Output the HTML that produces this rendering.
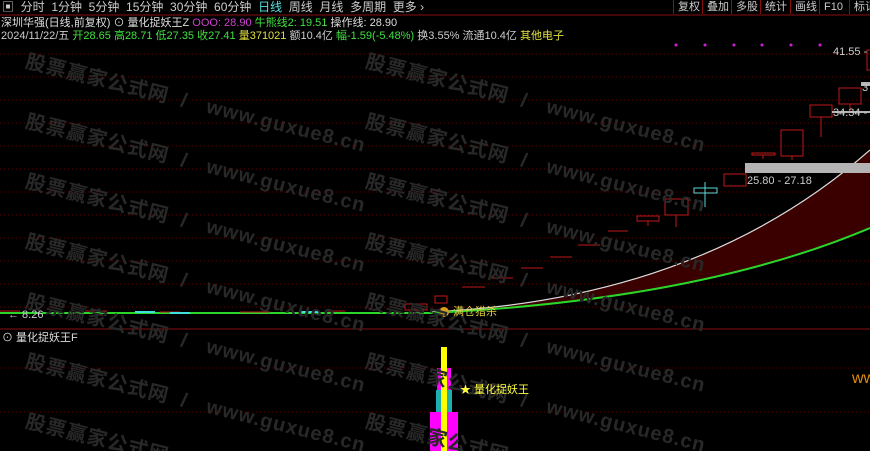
<!DOCTYPE html><html><head><meta charset="utf-8"><style>
html,body{margin:0;width:870px;height:451px;overflow:hidden}
body{background:#000;font-family:"Liberation Sans","Noto Sans CJK SC",sans-serif}
#w{position:relative;width:870px;height:451px;overflow:hidden}
.t{position:absolute;white-space:nowrap;font-size:11px;line-height:13px}
.wm{position:absolute;white-space:nowrap;color:#282828;font-size:20px;font-weight:bold;transform:rotate(14deg);transform-origin:0 0;letter-spacing:1px}
.b{position:absolute;top:0;height:14px;border-left:1px solid #8a1010;color:#ccc;font-size:11px;line-height:14px;padding:0 4px;white-space:nowrap}
</style></head><body><div id="w">
<svg width="870" height="451" style="position:absolute;left:0;top:0">
<g stroke="#5a0000" stroke-dasharray="1,3">
<line x1="0" y1="54" x2="870" y2="54"/><line x1="0" y1="77" x2="870" y2="77"/><line x1="0" y1="100" x2="870" y2="100"/><line x1="0" y1="123" x2="870" y2="123"/><line x1="0" y1="146" x2="870" y2="146"/><line x1="0" y1="169" x2="870" y2="169"/><line x1="0" y1="192" x2="870" y2="192"/><line x1="0" y1="215" x2="870" y2="215"/><line x1="0" y1="238" x2="870" y2="238"/><line x1="0" y1="261" x2="870" y2="261"/><line x1="0" y1="284" x2="870" y2="284"/><line x1="0" y1="307" x2="870" y2="307"/>
<line x1="0" y1="368" x2="870" y2="368"/><line x1="0" y1="412" x2="870" y2="412"/>
</g>
<line x1="0" y1="15" x2="870" y2="15" stroke="#8a1010"/>
<line x1="0" y1="329" x2="870" y2="329" stroke="#8a1010"/>
<path d="M430 312 Q700 300 870 150 L870 228 Q700 300 430 313Z" fill="#3a0000"/>
<path d="M430 312 Q700 300 870 150" stroke="#ddd" fill="none" stroke-width="1.2"/>
<path d="M0 313 L430 313 Q700 300 870 228" stroke="#2bd62b" fill="none" stroke-width="2"/>
<g fill="none" stroke="#c01818">
<rect x="405" y="304" width="22" height="6"/><rect x="435" y="296" width="12" height="7"/>
<line x1="462" y1="287" x2="485" y2="287"/><line x1="491" y1="278" x2="513" y2="278"/><line x1="521" y1="268" x2="543" y2="268"/><line x1="550" y1="257" x2="572" y2="257"/><line x1="578" y1="245" x2="600" y2="245"/><line x1="608" y1="231" x2="628" y2="231"/>
<rect x="637" y="216" width="22" height="5"/><line x1="648" y1="221" x2="648" y2="226"/>
<rect x="665" y="199" width="23" height="16"/><line x1="676" y1="215" x2="676" y2="227"/>
<rect x="724" y="174" width="22" height="12"/>
<rect x="752" y="153" width="23" height="2"/><line x1="763" y1="155" x2="763" y2="159"/>
<rect x="781" y="130" width="22" height="26"/><line x1="792" y1="156" x2="792" y2="160"/>
<rect x="810" y="105" width="22" height="12"/><line x1="821" y1="117" x2="821" y2="137"/>
<rect x="839" y="88" width="22" height="16"/><line x1="850" y1="104" x2="850" y2="112"/>
<rect x="867" y="50" width="6" height="20"/>
<line x1="0" y1="311" x2="20" y2="311"/><line x1="85" y1="311" x2="107" y2="311"/><line x1="160" y1="312" x2="180" y2="312"/><line x1="240" y1="312" x2="270" y2="312"/><line x1="325" y1="311" x2="345" y2="311"/>
</g>
<rect x="694" y="188" width="23" height="5" fill="none" stroke="#5ad8d8"/><line x1="705" y1="182" x2="705" y2="207" stroke="#5ad8d8"/>
<line x1="135" y1="312" x2="155" y2="312" stroke="#3ee0e0" stroke-width="2"/><line x1="300" y1="312" x2="320" y2="312" stroke="#3ee0e0" stroke-width="2"/><line x1="170" y1="313" x2="190" y2="313" stroke="#3ee0e0" stroke-width="2"/>
<rect x="745" y="163" width="125" height="10" fill="#b4b4b4"/>
<rect x="832" y="111" width="38" height="2" fill="#b4b4b4"/><rect x="861" y="82" width="9" height="4" fill="#b4b4b4"/>
<g fill="#d020d0"><circle cx="676" cy="45" r="1.5"/><circle cx="705" cy="45" r="1.5"/><circle cx="734" cy="45" r="1.5"/><circle cx="762" cy="45" r="1.5"/><circle cx="791" cy="45" r="1.5"/><circle cx="820" cy="45" r="1.5"/></g>
<rect x="430" y="412" width="28" height="39" fill="#ff00ff"/>
<rect x="437" y="368" width="14" height="44" fill="#ff00ff"/>
<rect x="436" y="390" width="16" height="22" fill="#1ab0b0"/>
<rect x="441" y="347" width="6" height="104" fill="#ffff00"/>
<circle cx="444" cy="312" r="5" fill="#d8a020"/>
</svg>
<div class="wm" style="left:30px;top:45px">股票赢家公式网 &nbsp;/ &nbsp;&nbsp;www.guxue8.cn</div>
<div class="wm" style="left:370px;top:45px">股票赢家公式网 &nbsp;/ &nbsp;&nbsp;www.guxue8.cn</div>
<div class="wm" style="left:30px;top:105px">股票赢家公式网 &nbsp;/ &nbsp;&nbsp;www.guxue8.cn</div>
<div class="wm" style="left:370px;top:105px">股票赢家公式网 &nbsp;/ &nbsp;&nbsp;www.guxue8.cn</div>
<div class="wm" style="left:30px;top:165px">股票赢家公式网 &nbsp;/ &nbsp;&nbsp;www.guxue8.cn</div>
<div class="wm" style="left:370px;top:165px">股票赢家公式网 &nbsp;/ &nbsp;&nbsp;www.guxue8.cn</div>
<div class="wm" style="left:30px;top:225px">股票赢家公式网 &nbsp;/ &nbsp;&nbsp;www.guxue8.cn</div>
<div class="wm" style="left:370px;top:225px">股票赢家公式网 &nbsp;/ &nbsp;&nbsp;www.guxue8.cn</div>
<div class="wm" style="left:30px;top:285px">股票赢家公式网 &nbsp;/ &nbsp;&nbsp;www.guxue8.cn</div>
<div class="wm" style="left:370px;top:285px">股票赢家公式网 &nbsp;/ &nbsp;&nbsp;www.guxue8.cn</div>
<div class="wm" style="left:30px;top:345px">股票赢家公式网 &nbsp;/ &nbsp;&nbsp;www.guxue8.cn</div>
<div class="wm" style="left:370px;top:345px">股票赢家公式网 &nbsp;/ &nbsp;&nbsp;www.guxue8.cn</div>
<div class="wm" style="left:30px;top:405px">股票赢家公式网</div>
<div class="wm" style="left:370px;top:405px">股票赢家公式网</div>
<div class="t" style="left:2px;top:1px;color:#ccc;font-size:12px">▣ &nbsp;分时 &nbsp;1分钟 &nbsp;5分钟 &nbsp;15分钟 &nbsp;30分钟 &nbsp;60分钟 &nbsp;<span style="color:#5ae0e0">日线</span> &nbsp;周线 &nbsp;月线 &nbsp;多周期 &nbsp;更多 ›</div>
<div class="b" style="left:673px">复权</div><div class="b" style="left:702px">叠加</div><div class="b" style="left:731px">多股</div><div class="b" style="left:760px">统计</div><div class="b" style="left:790px">画线</div><div class="b" style="left:819px">F10</div><div class="b" style="left:849px">标记</div>
<div class="t" style="left:1px;top:17px;color:#ddd">深圳华强(日线,前复权) ⊙ 量化捉妖王Z <span style="color:#d040d0">OOO: 28.90</span> <span style="color:#40e040">牛熊线2: 19.51</span> 操作线: 28.90</div>
<div class="t" style="left:1px;top:30px;color:#ccc">2024/11/22/五 <span style="color:#40e040">开28.65 高28.71 低27.35 收27.41</span> <span style="color:#e0e040">量371021</span> 额10.4亿 <span style="color:#40e040">幅-1.59(-5.48%)</span> 换3.55% 流通10.4亿 <span style="color:#e0e040">其他电子</span></div>
<div class="t" style="left:747px;top:175px;color:#ccc">25.80 - 27.18</div>
<div class="t" style="left:833px;top:107px;color:#ccc">34.34 - 3</div>
<div class="t" style="left:862px;top:82px;color:#ccc">37</div>
<div class="t" style="left:833px;top:46px;color:#ccc">41.55 -</div>
<div class="t" style="left:8px;top:309px;color:#ccc">← 8.26</div>
<div class="t" style="left:453px;top:306px;color:#e0d040">满仓猎杀</div>
<div class="t" style="left:2px;top:332px;color:#ddd">⊙ 量化捉妖王F</div>
<div class="t" style="left:460px;top:384px;color:#ffff40">★ 量化捉妖王</div>
<div class="t" style="left:852px;top:372px;color:#e08a10;font-size:16px">ww</div>
</div></body></html>
